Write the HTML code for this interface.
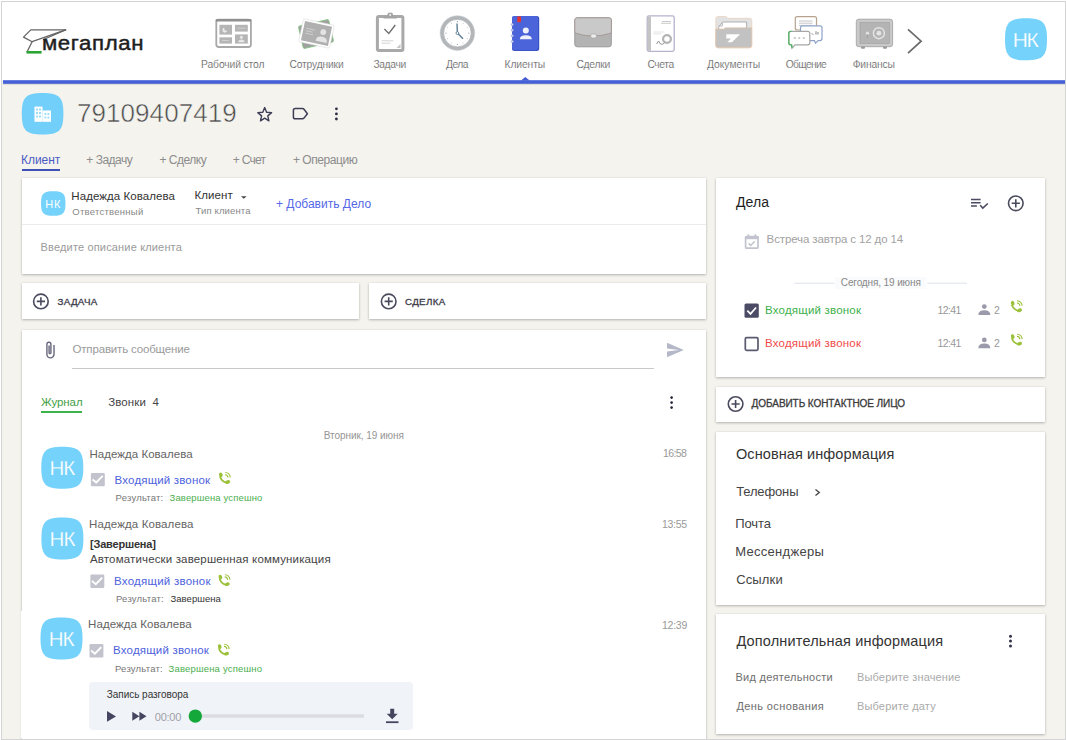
<!DOCTYPE html>
<html><head><meta charset="utf-8">
<style>
*{box-sizing:border-box;margin:0;padding:0}
html,body{width:1066px;height:740px;overflow:hidden;background:#fff}
body{font-family:"Liberation Sans",sans-serif;color:#333;position:relative}
.bg{position:absolute;left:1px;top:1px;width:1065px;height:739px;background:#f4f3ee}
.hdr{position:absolute;left:2px;top:2px;width:1063px;height:78px;background:#fff}
.bline{position:absolute;left:3px;top:80px;width:1062px;height:4px;background:linear-gradient(to bottom,#8a9ae6 0px,#4461d8 1px,#4461d8 3px,#7b8ccf 4px);box-shadow:0 1px 1px rgba(0,0,0,.10)}
.card{position:absolute;background:#fff;box-shadow:0 1px 2.5px rgba(0,0,0,.26),0 0 1px rgba(0,0,0,.10)}
.t{position:absolute;white-space:pre;font-family:"Liberation Sans",sans-serif}
.frame{position:absolute;left:1px;top:1px;width:1065px;height:739px;border:1px solid #d4d4d4;pointer-events:none}
svg{position:absolute;left:0;top:0}
</style></head><body>
<div class="bg"></div>
<div class="hdr"></div>
<div class="bline"></div>

<!-- left column cards -->
<div class="card" style="left:22px;top:178px;width:684px;height:96px"></div>
<div style="position:absolute;left:22px;top:224px;width:684px;height:1px;background:#ececec"></div>
<div class="card" style="left:22px;top:283px;width:337px;height:36px"></div>
<div class="card" style="left:369px;top:283px;width:337px;height:36px"></div>
<div class="card" style="left:22px;top:330px;width:684px;height:420px"></div>
<div style="position:absolute;left:72px;top:368px;width:582px;height:1px;background:#c9c9c9"></div>
<div style="position:absolute;left:41px;top:411px;width:41px;height:2px;background:#3bb54a"></div>
<div style="position:absolute;left:22px;top:168.5px;width:38px;height:2.2px;background:#3f51b5"></div>
<div style="position:absolute;left:89px;top:682px;width:324px;height:48px;background:#f0f3f7;border-radius:4px"></div>

<!-- right column cards -->
<div class="card" style="left:716px;top:178px;width:329px;height:199px"></div>
<div class="card" style="left:716px;top:387px;width:329px;height:35px"></div>
<div class="card" style="left:716px;top:432px;width:329px;height:173px"></div>
<div class="card" style="left:716px;top:614px;width:329px;height:120px"></div>
<div style="position:absolute;left:835px;top:277px;width:91px;height:12px;background:#fafbfc"></div>

<svg width="1066" height="740" viewBox="0 0 1066 740">
<!-- logo plane -->
<g fill="none" stroke="#666" stroke-width="1.3" stroke-linejoin="round" stroke-linecap="round">
  <path d="M65.6 29.9 L30.8 29.9 L23.5 37.1 L32.1 41.7 L27 52"/>
  <path d="M65.6 29.9 L32.1 41.7"/>
  <path d="M65.6 29.9 L43.5 39.5"/>
</g>
<path d="M26.6 52.3 L41.6 52.3" stroke="#2aa534" stroke-width="2.6"/>

<!-- nav: Рабочий стол -->
<g>
  <rect x="216.3" y="19.7" width="34.6" height="27.3" rx="2.5" fill="#fff" stroke="#a8a8a8" stroke-width="1.8"/>
  <rect x="215.6" y="19" width="36" height="2.6" rx="1.2" fill="#909090"/>
  <rect x="219.4" y="24.8" width="12.6" height="9.8" fill="#b5b5b5"/>
  <rect x="235" y="24.8" width="12.8" height="6.8" fill="#b5b5b5"/>
  <rect x="219.4" y="37.3" width="12.6" height="6.3" fill="#b5b5b5"/>
  <rect x="235" y="34.4" width="12.8" height="9.2" fill="#b5b5b5"/>
  <path d="M224.5 27.5 a2.6 2.6 0 1 0 3 3 a2.2 2.2 0 0 1 -3 -3 z" fill="#e8e8e8"/>
  <path d="M237.5 28.2 h8 M222 40.5 h7" stroke="#d6d6d6" stroke-width="0.8"/>
  <circle cx="241.4" cy="37.3" r="1.5" fill="#e8e8e8"/>
  <path d="M238.3 42.3 q0 -2.7 3.1 -2.7 q3.1 0 3.1 2.7 z" fill="#e8e8e8"/>
</g>
<!-- nav: Сотрудники -->
<g transform="translate(316 34) rotate(-13)">
  <rect x="-15.5" y="-11.5" width="31" height="23" rx="1.5" fill="#a0a0a0" stroke="#7cc47c" stroke-width="0.8"/>
</g>
<g transform="translate(316.5 33.5) rotate(12)">
  <rect x="-15.8" y="-11.8" width="31.6" height="23.6" rx="1.5" fill="#fff" stroke="#d8d8d8" stroke-width="0.5"/>
  <rect x="-13.8" y="-9.8" width="27.6" height="19.6" fill="#b0b0b0"/>
  <path d="M-11 -3 h9 M-11 -0.5 h7 M-11 2 h8" stroke="#cfcfcf" stroke-width="0.9"/>
  <circle cx="6.3" cy="-2.8" r="2.9" fill="#e4e4e4"/>
  <path d="M0.8 6.3 q0 -4.3 5.5 -4.3 q5.5 0 5.5 4.3 v1 h-11 z" fill="#e4e4e4"/>
</g>
<!-- nav: Задачи -->
<g>
  <rect x="377.4" y="16.5" width="25.5" height="34" rx="1.5" fill="#fff" stroke="#a9a9a9" stroke-width="3"/>
  <path d="M383.6 18.4 L396.8 18.4 L396.8 16.4 L393.6 15.9 L392.2 12.8 L388.2 12.8 L386.8 15.9 L383.6 16.4 Z" fill="#a4a4a4"/>
  <circle cx="390.2" cy="14.9" r="0.9" fill="#fff"/>
  <path d="M384.4 29 L388.8 33.5 L395.3 25" fill="none" stroke="#707070" stroke-width="1.4"/>
  <path d="M381.5 40.8 h12 M381.5 43.2 h9" stroke="#cfcfcf" stroke-width="0.9"/>
  <path d="M396.5 48 l4 -4 v4 z" fill="#c4c4c4"/>
</g>
<!-- nav: Дела -->
<g>
  <circle cx="457.4" cy="33.1" r="15.6" fill="#fff" stroke="#b3b6b8" stroke-width="3.4"/>
  <circle cx="457.4" cy="33.1" r="13.8" fill="none" stroke="#9aa0a4" stroke-width="0.6"/>
  <circle cx="457.4" cy="33.1" r="17.4" fill="none" stroke="#c9d3da" stroke-width="0.5"/>
  <path d="M457.4 33.1 L457.0 23.5 M457.4 33.1 L463 38.8" stroke="#5e7f95" stroke-width="1.4" fill="none"/>
  <circle cx="457.4" cy="33.1" r="1.4" fill="#fff" stroke="#5e7f95" stroke-width="0.9"/>
  <g fill="#8a9aa6">
    <circle cx="457.4" cy="21.7" r="0.6"/><circle cx="457.4" cy="44.5" r="0.6"/>
    <circle cx="446" cy="33.1" r="0.6"/><circle cx="468.8" cy="33.1" r="0.6"/>
    <circle cx="463.1" cy="23.2" r="0.45"/><circle cx="467.3" cy="27.4" r="0.45"/>
    <circle cx="451.7" cy="23.2" r="0.45"/><circle cx="447.5" cy="27.4" r="0.45"/>
    <circle cx="463.1" cy="43" r="0.45"/><circle cx="467.3" cy="38.8" r="0.45"/>
    <circle cx="451.7" cy="43" r="0.45"/><circle cx="447.5" cy="38.8" r="0.45"/>
  </g>
</g>
<!-- nav: Клиенты -->
<g>
  <rect x="512" y="16.1" width="27.2" height="35" rx="2.5" fill="#3a52c4"/>
  <rect x="512" y="16.1" width="26" height="33.8" rx="2.3" fill="#4b64da"/>
  <rect x="517.3" y="16.5" width="3.7" height="5.7" fill="#e8332f"/>
  <g fill="#dfe4f7" stroke="#8d9bd8" stroke-width="0.7">
    <circle cx="512.3" cy="24.6" r="1.1"/><circle cx="512.3" cy="30.2" r="1.1"/>
    <circle cx="512.3" cy="35.8" r="1.1"/><circle cx="512.3" cy="41.5" r="1.1"/>
  </g>
  <circle cx="525.8" cy="30.6" r="3" fill="#eef0fb"/>
  <path d="M519.8 39.2 q0 -4 6 -4 q6 0 6 4 z" fill="#eef0fb"/>
</g>
<!-- nav: Сделки -->
<g>
  <rect x="574.8" y="17.8" width="36.5" height="29" rx="2.5" fill="#b3b3b3" stroke="#9b9b9b" stroke-width="1"/>
  <path d="M574.8 20 q0 -2.2 2.2 -2.2 h32.2 q2.2 0 2.2 2.2 v13 q-18.2 6 -36.6 0 z" fill="#c9c9c9" stroke="#a2928f" stroke-width="0.8"/>
  <rect x="590.8" y="34" width="5.6" height="4" rx="1.6" fill="#eee" stroke="#a9a9a9" stroke-width="0.8"/>
</g>
<!-- nav: Счета -->
<g>
  <rect x="647.2" y="15.8" width="27" height="35.5" rx="1.8" fill="#fff" stroke="#b6b2cc" stroke-width="1.3"/>
  <rect x="647.6" y="16.3" width="3.4" height="34.5" fill="#c4c4c4"/>
  <path d="M662 21.5 h9 M661 23.3 h10" stroke="#bbb" stroke-width="0.8"/>
  <path d="M653.5 32 h11 M653.5 33.8 h8" stroke="#ddd" stroke-width="0.8"/>
  <circle cx="667" cy="39" r="3.9" fill="none" stroke="#b3b3b3" stroke-width="2.2"/>
  <path d="M656.5 44 l2 -3 l2 3 q2 1 4 -1" fill="none" stroke="#888" stroke-width="0.9"/>
</g>
<!-- nav: Документы -->
<g>
  <path d="M715.8 18.8 q0 -2.3 2.3 -2.3 h8 l1.6 1.8 h21.8 q2.3 0 2.3 2.3 v25 q0 2.3 -2.3 2.3 h-31.4 q-2.3 0 -2.3 -2.3 z" fill="#e2e2e2" stroke="#ead2bc" stroke-width="0.8"/>
  <path d="M718.8 33 v-6.5 l3.5 -4 q0.5 -0.5 1.5 -0.5 h22.8 v11 z" fill="#fff" stroke="#a8a8a8" stroke-width="0.9"/>
  <path d="M722.3 22.5 v3.5 h-3.5" fill="none" stroke="#a8a8a8" stroke-width="0.8"/>
  <path d="M715.8 29 h8 l1.5 -1.2 h26.4 v17.5 q0 2.3 -2.3 2.3 h-31.4 q-2.3 0 -2.3 -2.3 z" fill="#c2c2c2" stroke="#e6c6a8" stroke-width="0.7"/>
  <path d="M726.3 34.3 h13.8 l-8.2 8 h-4.6 l3.6 -3.8 h-4.6 z" fill="#fff"/>
</g>
<!-- nav: Общение -->
<g>
  <rect x="795.3" y="16.6" width="21.2" height="13.4" rx="2" fill="#fff" stroke="#b8a28e" stroke-width="1.2"/>
  <path d="M799 21 h13.5 M799 23.2 h13.5 M799 25.4 h13.5" stroke="#c6c6c6" stroke-width="1"/>
  <path d="M802.5 25.8 h17.5 q2 0 2 2 v10.8 q0 2 -2 2 h-1.8 l-2.7 2.6 l-1 -2.6 h-12 q-2 0 -2 -2 v-10.8 q0 -2 2 -2 z" fill="#fff" stroke="#8ea2c8" stroke-width="1.2"/>
  <path d="M790.8 31.3 h17 q2 0 2 2 v9.5 q0 2 -2 2 h-12.8 l-3 3.3 l-0.4 -3.3 h-0.8 q-2 0 -2 -2 v-9.5 q0 -2 2 -2 z" fill="#fff" stroke="#a6a6a6" stroke-width="1.2"/>
  <path d="M791.5 31.3 h-0.7 q-2 0 -2 2 v9.5 q0 2 2 2 h0.8 l0.4 3.3" fill="none" stroke="#55b566" stroke-width="1.3"/>
  <g fill="#c2c2c2"><circle cx="794.8" cy="38" r="1.1"/><circle cx="799.3" cy="38" r="1.1"/><circle cx="803.8" cy="38" r="1.1"/></g>
  <path d="M811.8 33.3 l1.6 1.6 M816 31.2 v3.4 M818 32 v2.5" stroke="#777" stroke-width="0.9"/>
</g>
<!-- nav: Финансы -->
<g>
  <rect x="856.3" y="19.2" width="36.3" height="27.5" rx="2.5" fill="#c9c9c9" stroke="#aaa" stroke-width="1"/>
  <rect x="860" y="22.5" width="29.5" height="21" fill="#b4b4b4" stroke="#999" stroke-width="0.5"/>
  <circle cx="878.9" cy="33.2" r="5.5" fill="none" stroke="#e4e4e4" stroke-width="1.4"/>
  <circle cx="878.9" cy="33.2" r="2.4" fill="#e4e4e4"/>
  <circle cx="867.5" cy="33.2" r="1.6" fill="#e4e4e4"/>
  <path d="M867.5 34.5 v3.5" stroke="#999" stroke-width="0.8"/>
  <rect x="861" y="46.5" width="4" height="2.3" rx="1" fill="#999"/>
  <rect x="883" y="46.5" width="4" height="2.3" rx="1" fill="#999"/>
</g>
<!-- chevron -->
<path d="M908 29.4 L921.1 41.2 L908 53.1" fill="none" stroke="#6a6a6a" stroke-width="1.7"/>

<!-- top avatar -->
<path d="M1005.00 39.30 C1005.00 22.50 1009.20 18.30 1026.00 18.30 S1047.00 22.50 1047.00 39.30 S1042.80 60.30 1026.00 60.30 S1005.00 56.10 1005.00 39.30 Z" fill="#74d2fb"/>
<!-- notch in blue line -->
<path d="M521 80.5 L525.3 77 L529.6 80.5 Z" fill="#4159d3"/>

<!-- title icon -->
<path d="M21.80 113.80 C21.80 97.16 25.96 93.00 42.60 93.00 S63.40 97.16 63.40 113.80 S59.24 134.60 42.60 134.60 S21.80 130.44 21.80 113.80 Z" fill="#72cffa"/>
<g fill="#fff">
  <rect x="34.5" y="106.6" width="8" height="15.2"/>
  <rect x="42.5" y="110.5" width="8.5" height="11.3"/>
</g>
<g fill="#9ddcfb">
  <rect x="36" y="108.5" width="2" height="2"/><rect x="39" y="108.5" width="2" height="2"/>
  <rect x="36" y="112" width="2" height="2"/><rect x="39" y="112" width="2" height="2"/>
  <rect x="36" y="115.5" width="2" height="2"/><rect x="39" y="115.5" width="2" height="2"/>
  <rect x="44.5" y="113" width="1.8" height="2"/><rect x="47.5" y="113" width="1.8" height="2"/>
  <rect x="44.5" y="116.5" width="1.8" height="2"/><rect x="47.5" y="116.5" width="1.8" height="2"/>
</g>
<!-- star -->
<path d="M264.7 107.6 L266.6 112.2 L271.6 112.6 L267.8 115.9 L268.9 120.8 L264.7 118.2 L260.5 120.8 L261.6 115.9 L257.8 112.6 L262.8 112.2 Z" fill="none" stroke="#3d3d55" stroke-width="1.4" stroke-linejoin="round"/>
<!-- tag -->
<path d="M295.2 108.6 h7.3 q0.9 0 1.5 0.7 l3.4 4.4 l-3.4 4.4 q-0.6 0.7 -1.5 0.7 h-7.3 q-1.8 0 -1.8 -1.8 v-6.6 q0 -1.8 1.8 -1.8 z" fill="none" stroke="#3d3d55" stroke-width="1.5" stroke-linejoin="round"/>
<!-- vertical dots title -->
<g fill="#2d2d48"><circle cx="336.4" cy="108.8" r="1.4"/><circle cx="336.4" cy="113.9" r="1.4"/><circle cx="336.4" cy="119" r="1.4"/></g>

<!-- card1 avatar -->
<path d="M41.00 203.55 C41.00 193.75 43.45 191.30 53.25 191.30 S65.50 193.75 65.50 203.55 S63.05 215.80 53.25 215.80 S41.00 213.35 41.00 203.55 Z" fill="#74d2fb"/>
<!-- dropdown triangle -->
<path d="M241 196.2 h5.6 l-2.8 2.6 z" fill="#444"/>

<!-- plus circles -->
<g fill="none" stroke="#4a4a5e" stroke-width="1.6">
  <circle cx="40.9" cy="301.4" r="7.3"/><path d="M40.9 297.3 v8.2 M36.8 301.4 h8.2"/>
  <circle cx="388.7" cy="301.4" r="7.3"/><path d="M388.7 297.3 v8.2 M384.6 301.4 h8.2"/>
  <circle cx="1015.8" cy="203.3" r="7.3"/><path d="M1015.8 199.2 v8.2 M1011.7 203.3 h8.2"/>
  <circle cx="735.6" cy="404" r="7.3"/><path d="M735.6 399.9 v8.2 M731.5 404 h8.2"/>
</g>

<!-- paperclip -->
<path d="M54.0 345 V354.3 A3.55 3.55 0 0 1 46.9 354.3 V344.2 A2.0 2.0 0 0 1 50.9 344.2 V352.7 A0.9 0.9 0 0 1 49.1 352.7 V345.5" fill="none" stroke="#66667c" stroke-width="1.4"/>
<!-- send -->
<path d="M667 342.8 L683.8 350 L667 357.2 L667 351.6 L679 350 L667 348.4 Z" fill="#b4b8c8"/>
<!-- msg dots -->
<g fill="#23233a"><circle cx="671.6" cy="397.6" r="1.3"/><circle cx="671.6" cy="402.6" r="1.3"/><circle cx="671.6" cy="407.6" r="1.3"/></g>

<!-- entry avatars -->
<path d="M41.30 467.70 C41.30 450.90 45.50 446.70 62.30 446.70 S83.30 450.90 83.30 467.70 S79.10 488.70 62.30 488.70 S41.30 484.50 41.30 467.70 Z" fill="#74d2fb"/>
<path d="M41.40 538.50 C41.40 521.70 45.60 517.50 62.40 517.50 S83.40 521.70 83.40 538.50 S79.20 559.50 62.40 559.50 S41.40 555.30 41.40 538.50 Z" fill="#74d2fb"/>
<path d="M40.50 638.50 C40.50 621.70 44.70 617.50 61.50 617.50 S82.50 621.70 82.50 638.50 S78.30 659.50 61.50 659.50 S40.50 655.30 40.50 638.50 Z" fill="#74d2fb"/>

<!-- entry checkboxes -->
<g>
  <rect x="90.9" y="472.9" width="13.9" height="13.4" rx="1.2" fill="#c2c3cc"/>
  <path d="M92.5 479.4 l3.8 3.1 l6.4 -6.6" fill="none" stroke="#fff" stroke-width="1.9"/>
  <rect x="90.4" y="574.6" width="13.9" height="13.4" rx="1.2" fill="#c2c3cc"/>
  <path d="M92.0 581.1 l3.8 3.1 l6.4 -6.6" fill="none" stroke="#fff" stroke-width="1.9"/>
  <rect x="89.5" y="644.1" width="13.9" height="13.4" rx="1.2" fill="#c2c3cc"/>
  <path d="M91.1 650.6 l3.8 3.1 l6.4 -6.6" fill="none" stroke="#fff" stroke-width="1.9"/>
</g>

<!-- phone icons -->
<defs>
  <g id="ph">
    <path d="M1.2 4.0 Q2.4 8.2 7.4 9.9" fill="none" stroke="#9bc13a" stroke-width="1.7"/>
    <ellipse cx="2.0" cy="2.5" rx="1.7" ry="2.3" transform="rotate(-18 2.0 2.5)" fill="#9bc13a"/>
    <ellipse cx="8.6" cy="9.2" rx="2.3" ry="1.7" transform="rotate(-18 8.6 9.2)" fill="#9bc13a"/>
    <path d="M6.1 2.3 A2.8 2.8 0 0 1 8.8 5.0 M6.3 0.2 A4.9 4.9 0 0 1 11.0 4.9" fill="none" stroke="#9bc13a" stroke-width="1.1"/>
  </g>
</defs>
<use href="#ph" transform="translate(218.7 472.3) scale(1.05)"/>
<use href="#ph" transform="translate(218.3 574.5) scale(1.05)"/>
<use href="#ph" transform="translate(217.6 644) scale(1.05)"/>
<use href="#ph" transform="translate(1010.6 300.6) scale(1.05)"/>
<use href="#ph" transform="translate(1010.6 334) scale(1.05)"/>

<!-- player -->
<path d="M107 711 L116 716.4 L107 721.8 Z" fill="#45455f"/>
<path d="M132.3 711.8 L139.4 716.3 L132.3 720.8 Z M139.4 711.8 L146.5 716.3 L139.4 720.8 Z" fill="#45455f"/>
<rect x="195" y="714.3" width="169" height="3.5" rx="1" fill="#dcdde4"/>
<circle cx="195.3" cy="716.1" r="6.7" fill="#14a83a"/>
<path d="M388 708.8 h4 v5 h3.5 l-5.5 5.5 l-5.5 -5.5 h3.5 z" fill="#45455f" transform="translate(2.2 0)"/>
<rect x="386" y="721.3" width="12.5" height="1.8" fill="#45455f"/>

<!-- right: list-check -->
<g fill="none" stroke="#4a4a62" stroke-width="1.6">
  <path d="M971 199.5 h9.6 M971 202.8 h9.6 M971 206 h5.9"/>
  <path d="M980.2 205.3 l2.6 2.8 l5 -4.6"/>
</g>
<!-- calendar -->
<g fill="none" stroke="#c3c3cf" stroke-width="1.7">
  <rect x="745.6" y="236.6" width="12.4" height="11.6" rx="1"/>
  <path d="M748.4 234.2 v2.5 M755.4 234.2 v2.5"/>
  <path d="M748.6 243.3 l2.1 2.1 l4 -4.1" stroke-width="1.5"/>
</g>
<rect x="745" y="236" width="13.6" height="3.2" fill="#c3c3cf"/>
<!-- Сегодня lines -->
<path d="M794.5 283.2 h39.8 M927.3 283.2 h39.7" stroke="#dde3ea" stroke-width="1"/>
<!-- checkboxes right -->
<rect x="744.5" y="303.5" width="14.3" height="14.3" rx="1.5" fill="#4b4b66"/>
<path d="M747.3 310.7 l3.2 3.2 l5.6 -6.4" fill="none" stroke="#fff" stroke-width="1.7"/>
<rect x="745.3" y="337.7" width="12.7" height="12.7" rx="1.3" fill="none" stroke="#5a5a70" stroke-width="1.7"/>
<!-- person icons -->
<g fill="#9a9aaa">
  <circle cx="984.3" cy="306.6" r="2.4"/><path d="M978.3 315 q0 -4.7 6 -4.7 q6 0 6 4.7 z"/>
  <circle cx="984.3" cy="339.9" r="2.4"/><path d="M978.3 348.3 q0 -4.7 6 -4.7 q6 0 6 4.7 z"/>
</g>
<!-- info chevron -->
<path d="M815.5 489.5 l3.8 3 l-3.8 3" fill="none" stroke="#444" stroke-width="1.3"/>
<!-- extra dots -->
<g fill="#33334a"><circle cx="1010.5" cy="636.3" r="1.5"/><circle cx="1010.5" cy="641.1" r="1.5"/><circle cx="1010.5" cy="645.9" r="1.5"/></g>

</svg>

<div style="position:absolute;left:21px;top:611px;width:1px;height:127px;background:#fff"></div>
<div class="t" style="left:42.2px;top:33.3px;font-size:20px;line-height:20px;color:#1e1e1e;-webkit-text-stroke:0.45px #1e1e1e;letter-spacing:0.60px;transform:scaleX(1.109);transform-origin:1.0px 0;">мегаплан</div>
<div class="t" style="left:201.1px;top:60.0px;font-size:10.3px;line-height:10.3px;color:#505050;-webkit-text-stroke:0.2px #fff;letter-spacing:-0.12px;">Рабочий стол</div>
<div class="t" style="left:289.5px;top:60.0px;font-size:10.3px;line-height:10.3px;color:#505050;-webkit-text-stroke:0.2px #fff;letter-spacing:-0.18px;">Сотрудники</div>
<div class="t" style="left:373.4px;top:60.0px;font-size:10.3px;line-height:10.3px;color:#505050;-webkit-text-stroke:0.2px #fff;letter-spacing:-0.36px;">Задачи</div>
<div class="t" style="left:446.0px;top:60.0px;font-size:10.3px;line-height:10.3px;color:#505050;-webkit-text-stroke:0.2px #fff;letter-spacing:-0.53px;">Дела</div>
<div class="t" style="left:504.5px;top:60.0px;font-size:10.3px;line-height:10.3px;color:#505050;-webkit-text-stroke:0.2px #fff;letter-spacing:-0.10px;">Клиенты</div>
<div class="t" style="left:576.4px;top:60.0px;font-size:10.3px;line-height:10.3px;color:#505050;-webkit-text-stroke:0.2px #fff;letter-spacing:-0.24px;">Сделки</div>
<div class="t" style="left:647.4px;top:60.0px;font-size:10.3px;line-height:10.3px;color:#505050;-webkit-text-stroke:0.2px #fff;letter-spacing:-0.40px;">Счета</div>
<div class="t" style="left:706.9px;top:60.0px;font-size:10.3px;line-height:10.3px;color:#505050;-webkit-text-stroke:0.2px #fff;letter-spacing:0.01px;">Документы</div>
<div class="t" style="left:785.7px;top:60.0px;font-size:10.3px;line-height:10.3px;color:#505050;-webkit-text-stroke:0.2px #fff;letter-spacing:-0.67px;">Общение</div>
<div class="t" style="left:852.7px;top:60.0px;font-size:10.3px;line-height:10.3px;color:#505050;-webkit-text-stroke:0.2px #fff;letter-spacing:-0.18px;">Финансы</div>
<div class="t" style="left:1012.8px;top:28.7px;font-size:21px;line-height:21px;color:#fff;-webkit-text-stroke:0.25px #74d2fb;letter-spacing:-1.40px;">НК</div>
<div class="t" style="left:76.9px;top:100.3px;font-size:26px;line-height:26px;color:#4a4a4a;-webkit-text-stroke:0.55px #f4f3ee;letter-spacing:0.08px;">79109407419</div>
<div class="t" style="left:21.1px;top:153.6px;font-size:12px;line-height:12px;color:#4a5bc4;letter-spacing:-0.06px;">Клиент</div>
<div class="t" style="left:86.3px;top:153.6px;font-size:12px;line-height:12px;color:#8c8c8c;letter-spacing:-0.50px;">+ Задачу</div>
<div class="t" style="left:159.5px;top:153.6px;font-size:12px;line-height:12px;color:#8c8c8c;letter-spacing:-0.49px;">+ Сделку</div>
<div class="t" style="left:232.8px;top:153.6px;font-size:12px;line-height:12px;color:#8c8c8c;letter-spacing:-0.72px;">+ Счет</div>
<div class="t" style="left:292.9px;top:153.6px;font-size:12px;line-height:12px;color:#8c8c8c;letter-spacing:-0.43px;">+ Операцию</div>
<div class="t" style="left:45.2px;top:198.6px;font-size:11px;line-height:11px;color:#fff;letter-spacing:0.90px;">НК</div>
<div class="t" style="left:71.3px;top:191.0px;font-size:11.5px;line-height:11.5px;color:#333;letter-spacing:0.07px;">Надежда Ковалева</div>
<div class="t" style="left:72.3px;top:206.7px;font-size:9.5px;line-height:9.5px;color:#888;letter-spacing:0.26px;">Ответственный</div>
<div class="t" style="left:194.4px;top:190.0px;font-size:11.5px;line-height:11.5px;color:#333;letter-spacing:0.10px;">Клиент</div>
<div class="t" style="left:195.4px;top:205.8px;font-size:9.5px;line-height:9.5px;color:#888;letter-spacing:0.15px;">Тип клиента</div>
<div class="t" style="left:276.0px;top:197.9px;font-size:12px;line-height:12px;color:#5468e8;letter-spacing:0.01px;">+ Добавить Дело</div>
<div class="t" style="left:40.6px;top:242.4px;font-size:11px;line-height:11px;color:#9a9a9a;letter-spacing:0.16px;">Введите описание клиента</div>
<div class="t" style="left:57.5px;top:296.9px;font-size:9.8px;line-height:9.8px;color:#3d3d4a;-webkit-text-stroke:0.3px #3d3d4a;letter-spacing:0.30px;">ЗАДАЧА</div>
<div class="t" style="left:405.0px;top:296.9px;font-size:9.8px;line-height:9.8px;color:#3d3d4a;-webkit-text-stroke:0.3px #3d3d4a;letter-spacing:0.30px;">СДЕЛКА</div>
<div class="t" style="left:72.5px;top:344.4px;font-size:11.5px;line-height:11.5px;color:#9a9a9a;letter-spacing:-0.17px;">Отправить сообщение</div>
<div class="t" style="left:41.0px;top:396.9px;font-size:11.5px;line-height:11.5px;color:#43a047;letter-spacing:-0.06px;">Журнал</div>
<div class="t" style="left:108.2px;top:396.9px;font-size:11.5px;line-height:11.5px;color:#444;letter-spacing:0.11px;">Звонки  4</div>
<div class="t" style="left:323.7px;top:430.6px;font-size:10px;line-height:10px;color:#959595;letter-spacing:-0.04px;">Вторник, 19 июня</div>
<div class="t" style="left:49.5px;top:458.0px;font-size:20.5px;line-height:20.5px;color:#fff;-webkit-text-stroke:0.25px #74d2fb;letter-spacing:-1.00px;">НК</div>
<div class="t" style="left:89.5px;top:449.3px;font-size:11.5px;line-height:11.5px;color:#646464;letter-spacing:0.03px;">Надежда Ковалева</div>
<div class="t" style="left:662.9px;top:447.8px;font-size:10.5px;line-height:10.5px;color:#999;letter-spacing:-0.57px;">16:58</div>
<div class="t" style="left:114.6px;top:475.1px;font-size:11.5px;line-height:11.5px;color:#4d62dc;letter-spacing:0.16px;">Входящий звонок</div>
<div class="t" style="left:115.6px;top:493.2px;font-size:9.5px;line-height:9.5px;color:#777;letter-spacing:0.20px;">Результат:</div>
<div class="t" style="left:169.5px;top:493.2px;font-size:9.5px;line-height:9.5px;color:#4caf50;letter-spacing:0.14px;">Завершена успешно</div>
<div class="t" style="left:49.6px;top:528.8px;font-size:20.5px;line-height:20.5px;color:#fff;-webkit-text-stroke:0.25px #74d2fb;letter-spacing:-1.00px;">НК</div>
<div class="t" style="left:89.0px;top:519.2px;font-size:11.5px;line-height:11.5px;color:#646464;letter-spacing:0.12px;">Надежда Ковалева</div>
<div class="t" style="left:662.0px;top:519.4px;font-size:10.5px;line-height:10.5px;color:#999;letter-spacing:-0.28px;">13:55</div>
<div class="t" style="left:90.0px;top:539.1px;font-size:11px;line-height:11px;color:#333;font-weight:bold;letter-spacing:-0.20px;">[Завершена]</div>
<div class="t" style="left:90.0px;top:553.7px;font-size:11.5px;line-height:11.5px;color:#444;letter-spacing:0.15px;">Автоматически завершенная коммуникация</div>
<div class="t" style="left:114.0px;top:576.0px;font-size:11.5px;line-height:11.5px;color:#4d62dc;letter-spacing:0.24px;">Входящий звонок</div>
<div class="t" style="left:116.0px;top:593.6px;font-size:9.5px;line-height:9.5px;color:#777;letter-spacing:0.20px;">Результат:</div>
<div class="t" style="left:170.5px;top:593.6px;font-size:9.5px;line-height:9.5px;color:#333;letter-spacing:0.04px;">Завершена</div>
<div class="t" style="left:48.7px;top:628.8px;font-size:20.5px;line-height:20.5px;color:#fff;-webkit-text-stroke:0.25px #74d2fb;letter-spacing:-1.00px;">НК</div>
<div class="t" style="left:88.1px;top:618.9px;font-size:11.5px;line-height:11.5px;color:#646464;letter-spacing:0.07px;">Надежда Ковалева</div>
<div class="t" style="left:662.0px;top:619.9px;font-size:10.5px;line-height:10.5px;color:#999;letter-spacing:-0.25px;">12:39</div>
<div class="t" style="left:113.0px;top:645.3px;font-size:11.5px;line-height:11.5px;color:#4d62dc;letter-spacing:0.19px;">Входящий звонок</div>
<div class="t" style="left:115.0px;top:663.5px;font-size:9.5px;line-height:9.5px;color:#777;letter-spacing:0.20px;">Результат:</div>
<div class="t" style="left:168.5px;top:663.5px;font-size:9.5px;line-height:9.5px;color:#4caf50;letter-spacing:0.18px;">Завершена успешно</div>
<div class="t" style="left:106.8px;top:690.2px;font-size:10px;line-height:10px;color:#333;letter-spacing:-0.04px;">Запись разговора</div>
<div class="t" style="left:154.8px;top:711.5px;font-size:11px;line-height:11px;color:#a0a0a8;letter-spacing:-0.25px;">00:00</div>
<div class="t" style="left:736.0px;top:195.4px;font-size:14px;line-height:14px;color:#1e1e1e;letter-spacing:0.13px;">Дела</div>
<div class="t" style="left:766.6px;top:233.6px;font-size:11.5px;line-height:11.5px;color:#a2a2a2;letter-spacing:-0.12px;">Встреча завтра с 12 до 14</div>
<div class="t" style="left:840.8px;top:278.0px;font-size:10px;line-height:10px;color:#888;letter-spacing:-0.12px;">Сегодня, 19 июня</div>
<div class="t" style="left:765.0px;top:304.6px;font-size:11.5px;line-height:11.5px;color:#3cb04c;letter-spacing:0.20px;">Входящий звонок</div>
<div class="t" style="left:937.5px;top:304.6px;font-size:10.5px;line-height:10.5px;color:#999;letter-spacing:-0.62px;">12:41</div>
<div class="t" style="left:994.0px;top:304.6px;font-size:10.5px;line-height:10.5px;color:#999;letter-spacing:0.00px;">2</div>
<div class="t" style="left:765.0px;top:338.0px;font-size:11.5px;line-height:11.5px;color:#f04a4a;letter-spacing:0.20px;">Входящий звонок</div>
<div class="t" style="left:937.5px;top:337.9px;font-size:10.5px;line-height:10.5px;color:#999;letter-spacing:-0.62px;">12:41</div>
<div class="t" style="left:994.0px;top:337.9px;font-size:10.5px;line-height:10.5px;color:#999;letter-spacing:0.00px;">2</div>
<div class="t" style="left:751.6px;top:399.3px;font-size:10px;line-height:10px;color:#3a3a3a;-webkit-text-stroke:0.3px #3a3a3a;letter-spacing:-0.07px;">ДОБАВИТЬ КОНТАКТНОЕ ЛИЦО</div>
<div class="t" style="left:736.0px;top:446.5px;font-size:14.5px;line-height:14.5px;color:#333;letter-spacing:0.09px;">Основная информация</div>
<div class="t" style="left:736.2px;top:484.5px;font-size:13px;line-height:13px;color:#444;letter-spacing:-0.14px;">Телефоны</div>
<div class="t" style="left:735.2px;top:516.7px;font-size:13px;line-height:13px;color:#444;letter-spacing:-0.10px;">Почта</div>
<div class="t" style="left:735.2px;top:545.0px;font-size:13px;line-height:13px;color:#444;letter-spacing:0.30px;">Мессенджеры</div>
<div class="t" style="left:736.2px;top:573.4px;font-size:13px;line-height:13px;color:#444;letter-spacing:0.14px;">Ссылки</div>
<div class="t" style="left:736.4px;top:633.6px;font-size:14.5px;line-height:14.5px;color:#333;letter-spacing:0.17px;">Дополнительная информация</div>
<div class="t" style="left:735.4px;top:671.7px;font-size:11px;line-height:11px;color:#6e6e6e;letter-spacing:0.28px;">Вид деятельности</div>
<div class="t" style="left:857.0px;top:671.7px;font-size:11px;line-height:11px;color:#aaa;letter-spacing:0.15px;">Выберите значение</div>
<div class="t" style="left:736.4px;top:701.0px;font-size:11px;line-height:11px;color:#6e6e6e;letter-spacing:0.39px;">День основания</div>
<div class="t" style="left:857.0px;top:701.0px;font-size:11px;line-height:11px;color:#aaa;letter-spacing:0.15px;">Выберите дату</div>
<div class="frame"></div>
</body></html>
